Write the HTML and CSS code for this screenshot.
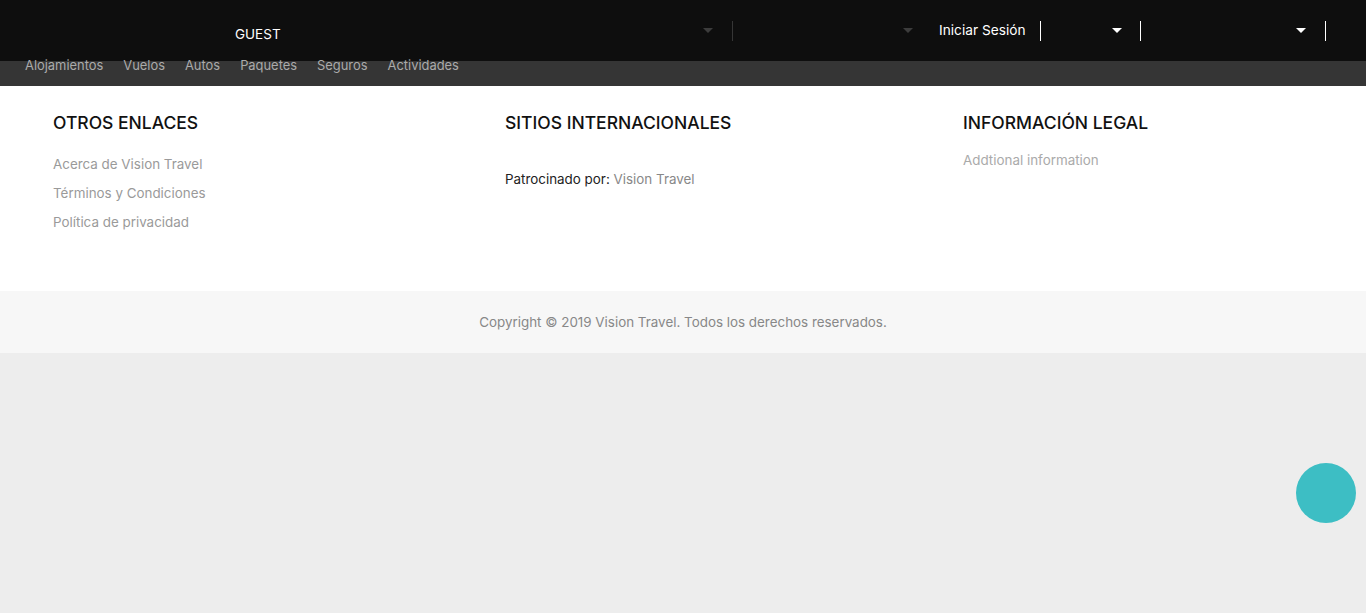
FILE: index.html
```html
<!DOCTYPE html>
<html lang="es">
<head>
<meta charset="utf-8">
<title>Vision Travel</title>
<link rel="stylesheet" href="styles.css">
</head>
<body>
<header class="topbar">
  <div class="guest">GUEST</div>
  <div class="right-group">
    <div class="dd dd1"><span class="caret caret-dark"></span></div>
    <span class="sep sep-dark"></span>
    <div class="dd dd2"><span class="caret caret-dark"></span></div>
    <a class="login" href="#">Iniciar Sesión</a>
    <span class="sep"></span>
    <div class="dd dd3"><span class="caret"></span></div>
    <span class="sep"></span>
    <div class="dd dd4"><span class="caret"></span></div>
    <span class="sep"></span>
  </div>
</header>
<nav class="nav">
  <a href="#">Alojamientos</a>
  <a href="#">Vuelos</a>
  <a href="#">Autos</a>
  <a href="#">Paquetes</a>
  <a href="#">Seguros</a>
  <a href="#">Actividades</a>
</nav>
<footer class="footer">
  <div class="cols">
    <div class="col">
      <h3>OTROS ENLACES</h3>
      <ul class="links">
        <li><a href="#">Acerca de Vision Travel</a></li>
        <li><a href="#">Términos y Condiciones</a></li>
        <li><a href="#">Política de privacidad</a></li>
      </ul>
    </div>
    <div class="col">
      <h3>SITIOS INTERNACIONALES</h3>
      <p class="sponsor">Patrocinado por: <a href="#">Vision Travel</a></p>
    </div>
    <div class="col">
      <h3>INFORMACIÓN LEGAL</h3>
      <p class="info"><a href="#">Addtional information</a></p>
    </div>
  </div>
</footer>
<div class="copyright">Copyright © 2019 Vision Travel. Todos los derechos reservados.</div>
<div class="fab"></div>
</body>
</html>
```
FILE: styles.css
```css
* { box-sizing: border-box; }
html, body { margin: 0; padding: 0; }
body {
  background: #ededed;
  font-family: Inter, "Noto Sans", "Liberation Sans", sans-serif;
  font-size: 13.4px;
  color: #222;
}
a { text-decoration: none; color: inherit; }

.topbar {
  height: 61px;
  background: #0e0e0e;
  display: flex;
  align-items: center;
  padding-left: 235px;
  padding-right: 40px;
}
.guest {
  color: #fff;
  font-size: 13.5px;
  margin-top: 6px;
}
.right-group {
  margin-left: auto;
  display: flex;
  align-items: center;
}
.dd {
  height: 20px;
  display: flex;
  align-items: center;
  justify-content: flex-end;
}
.dd1 { width: 200px; padding-right: 19px; }
.dd2 { width: 193px; padding-right: 13px; }
.dd3 { width: 99px; padding-right: 18px; }
.dd4 { width: 184px; padding-right: 19px; }
.caret {
  width: 0; height: 0;
  border-left: 5px solid transparent;
  border-right: 5px solid transparent;
  border-top: 5px solid #fff;
}
.caret-dark { border-top-color: #3c3c3c; }
.sep {
  width: 1px;
  height: 20px;
  background: #fff;
}
.sep-dark { background: #363636; }
.login {
  width: 114px;
  padding-left: 13px;
  color: #fff;
  font-size: 13.7px;
  white-space: nowrap;
  margin-top: -2px;
}

.nav {
  height: 25px;
  background: #353535;
  display: flex;
  align-items: flex-start;
  gap: 20px;
  padding-left: 25px;
  line-height: 9px;
  font-size: 12.9px;
}
.nav a { color: #aaa; }

.footer {
  background: #fff;
  height: 205px;
  padding-top: 28px;
}
.cols {
  display: grid;
  grid-template-columns: 452px 458px 1fr;
  padding-left: 53px;
}
.col h3 {
  margin: 0;
  font-size: 17.5px;
  line-height: 18px;
  font-weight: 500;
  color: #111;
}
.links {
  list-style: none;
  margin: 18px 0 0;
  padding: 0;
  line-height: 29px;
}
.links a { color: #9a9a9a; }
.sponsor {
  margin: 33px 0 0;
  line-height: 28px;
  color: #222;
}
.sponsor a { color: #888; }
.info {
  margin: 18px 0 0;
  line-height: 20px;
}
.info a { color: #aaa; }

.copyright {
  height: 62px;
  line-height: 62px;
  background: #f7f7f7;
  text-align: center;
  color: #888;
}

.fab {
  position: fixed;
  right: 10px;
  bottom: 90px;
  width: 60px;
  height: 60px;
  border-radius: 50%;
  background: #3dbec4;
}
```
